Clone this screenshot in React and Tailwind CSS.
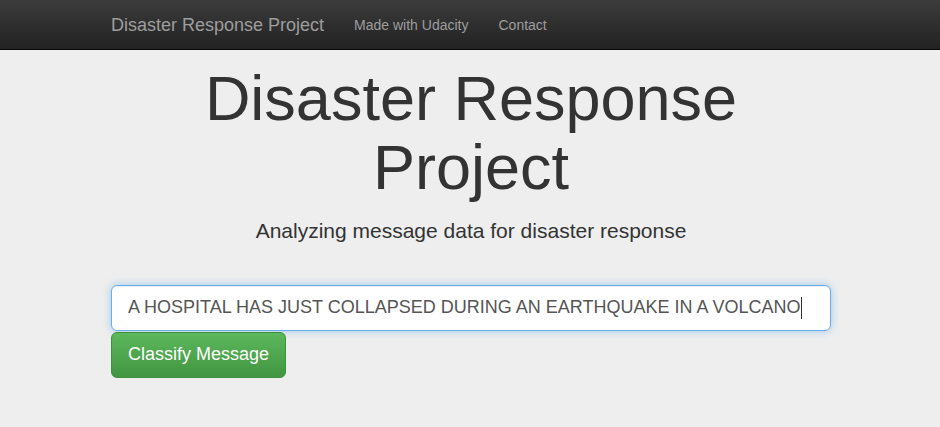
export default function App() {
  return (
    <div className="min-h-[427px] bg-[#eeeeee] text-[#333] font-['Liberation_Sans',Arial,sans-serif]">
      {/* Navbar */}
      <nav className="h-[50px] bg-gradient-to-b from-[#3c3c3c] to-[#222222] border-b border-[#080808]">
        <div className="w-[750px] mx-auto pl-[16px] pr-[14px] flex items-center h-full">
          <a className="text-[18px] leading-[20px] text-[#9d9d9d] pr-[15px]">Disaster Response Project</a>
          <ul className="flex text-[14px] leading-[20px] text-[#9d9d9d]">
            <li className="px-[15px]">Made with Udacity</li>
            <li className="px-[15px]">Contact</li>
          </ul>
        </div>
      </nav>

      {/* Jumbotron */}
      <div className="w-[750px] mx-auto pl-[16px] pr-[14px]">
        <h1 className="mt-[14px] text-[63px] leading-[1.1] text-center text-[#333]">Disaster Response Project</h1>
        <p className="mt-[13px] text-[21px] leading-[30px] text-center text-[#333]">
          Analyzing message data for disaster response
        </p>

        <div className="mt-[39px]">
          <div className="h-[46px] w-full bg-white border border-[#66afe9] rounded-[6px] px-[16px] flex items-center text-[18px] text-[#555] shadow-[inset_0_1px_1px_rgba(0,0,0,0.075),0_0_8px_rgba(102,175,233,0.6)]">
            <span>A HOSPITAL HAS JUST COLLAPSED DURING AN EARTHQUAKE IN A VOLCANO</span>
            <span className="w-px h-[22px] bg-[#333]"></span>
          </div>
          <button className="mt-px h-[46px] px-[16px] text-[18px] text-white rounded-[6px] border border-[#3e8f3e] bg-gradient-to-b from-[#5cb85c] to-[#419641]">
            Classify Message
          </button>
        </div>
      </div>
    </div>
  );
}
